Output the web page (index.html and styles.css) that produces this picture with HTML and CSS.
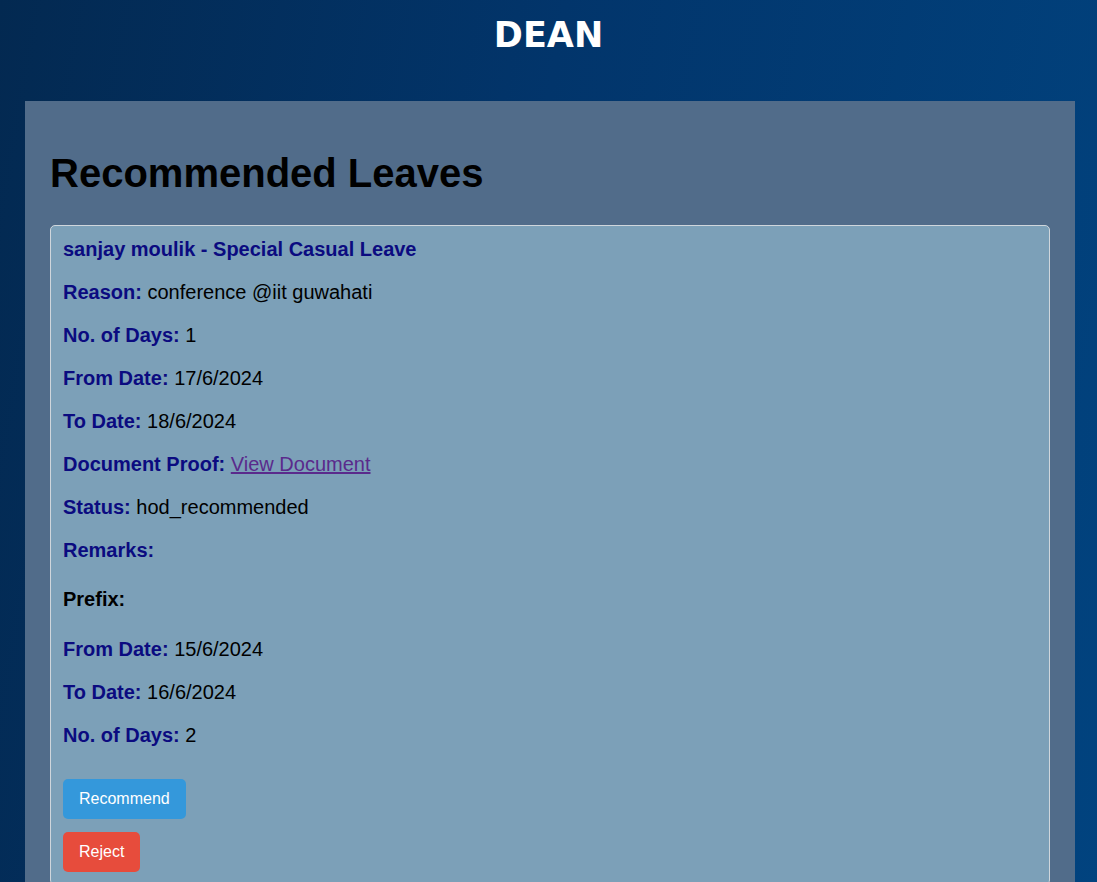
FILE: index.html
```html
<!DOCTYPE html>
<html lang="en">
<head>
<meta charset="utf-8">
<title>Dean</title>
<link rel="stylesheet" href="styles.css">
</head>
<body>
<header class="topbar">
  <h1 class="brand">DEAN</h1>
</header>
<main class="panel">
  <h2 class="panel-title">Recommended Leaves</h2>
  <section class="leave-card">
    <h3 class="leave-head">sanjay moulik - Special Casual Leave</h3>
    <p class="row"><span class="lbl">Reason:</span> conference @iit guwahati</p>
    <p class="row"><span class="lbl">No. of Days:</span> 1</p>
    <p class="row"><span class="lbl">From Date:</span> 17/6/2024</p>
    <p class="row"><span class="lbl">To Date:</span> 18/6/2024</p>
    <p class="row"><span class="lbl">Document Proof:</span> <a class="doc-link" href="#">View Document</a></p>
    <p class="row"><span class="lbl">Status:</span> hod_recommended</p>
    <p class="row"><span class="lbl">Remarks:</span></p>
    <h4 class="sub-head">Prefix:</h4>
    <p class="row"><span class="lbl">From Date:</span> 15/6/2024</p>
    <p class="row"><span class="lbl">To Date:</span> 16/6/2024</p>
    <p class="row"><span class="lbl">No. of Days:</span> 2</p>
    <div class="actions">
      <button class="btn btn-blue">Recommend</button>
      <button class="btn btn-red">Reject</button>
    </div>
  </section>
</main>
</body>
</html>
```

FILE: styles.css
```css
html, body {
  margin: 0;
  padding: 0;
}
body {
  min-height: 100vh;
  background: linear-gradient(100deg, #032951 0%, #02356b 45%, #01437f 100%);
  font-family: "Liberation Sans", Arial, sans-serif;
  color: #000;
}
.topbar {
  padding: 15px 0 45px;
  text-align: center;
}
.brand {
  margin: 0;
  font-family: "DejaVu Sans", sans-serif;
  font-weight: 700;
  font-size: 35px;
  line-height: 41px;
  color: #fff;
}
.panel {
  margin: 0 22px 0 25px;
  padding: 49px 25px 25px;
  background: #516c8a;
}
.panel-title {
  margin: 0 0 29px;
  font-size: 40px;
  line-height: 46px;
  font-weight: 700;
  color: #000;
}
.leave-card {
  background: #7ca0b8;
  border: 1px solid #cfd6dc;
  border-radius: 5px;
  padding: 12px 12px 12px;
}
.leave-head {
  margin: 0 0 20px;
  font-size: 20px;
  line-height: 23px;
  font-weight: 700;
  color: #0b0b80;
}
.row {
  margin: 0 0 20px;
  font-size: 20px;
  line-height: 23px;
  color: #000;
}
.lbl {
  font-weight: 700;
  color: #0b0b80;
}
.doc-link {
  color: #5a2a8c;
  text-decoration: underline;
}
.sub-head {
  margin: 26px 0 27px;
  font-size: 20px;
  line-height: 23px;
  font-weight: 700;
  color: #000;
}
.actions {
  display: flex;
  flex-direction: column;
  align-items: flex-start;
  gap: 13px;
  margin-top: 32px;
}
.btn {
  border: none;
  border-radius: 5px;
  padding: 10px 16px;
  font-family: "Liberation Sans", Arial, sans-serif;
  font-size: 16px;
  line-height: 20px;
  color: #fff;
  cursor: pointer;
}
.btn-blue {
  background: #3498db;
}
.btn-red {
  background: #e74c3c;
}
```
